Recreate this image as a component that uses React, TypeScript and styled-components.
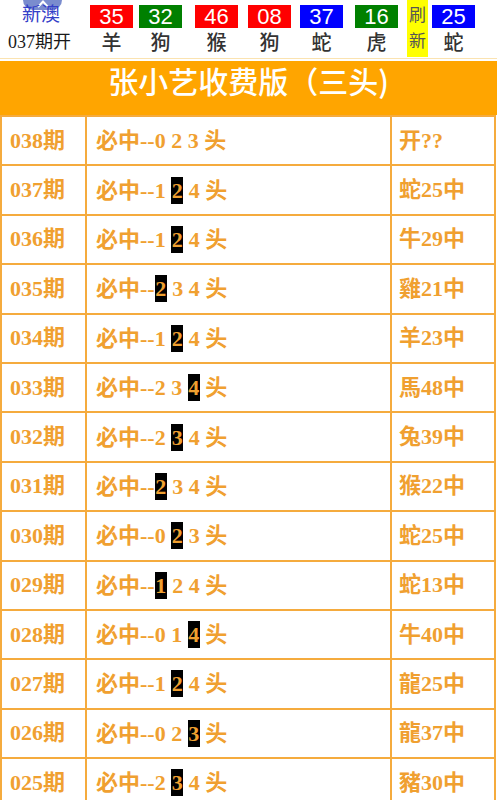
import React from "react";
import styled, { createGlobalStyle } from "styled-components";

const Global = createGlobalStyle`
  html, body { margin: 0; padding: 0; background: #fff; }
  body { width: 497px; overflow: hidden; }
`;

const Page = styled.div`
  width: 497px;
  background: #fff;
`;

const TopBar = styled.div`
  display: grid;
  grid-template-columns: 90px 49px 56px 53px 52px 55px 52px 25px 1fr;
  height: 58px;
  border-bottom: 1px solid #fbe3b0;
  font-family: "Noto Sans CJK SC", sans-serif;
`;

const IssueCell = styled.div`
  position: relative;
  display: flex;
  flex-direction: column;
  align-items: flex-start;
`;

const Tab = styled.div`
  position: absolute;
  left: 23px;
  top: 0;
  width: 39px;
  height: 10px;
  background: #7a8cce;
  border-radius: 0 0 12px 12px;
  display: flex;
  justify-content: center;
`;

const Brand = styled.div`
  position: relative;
  margin: 1px 0 0 22px;
  font-size: 19px;
  line-height: 23px;
  color: #3440c8;
`;

const OpenLabel = styled.div`
  margin: 8px 0 0 8px;
  font-family: "Liberation Serif", "Noto Sans CJK SC", serif;
  font-size: 18px;
  line-height: 20px;
  color: #1a1a1a;
`;

const BallCell = styled.div`
  display: flex;
  flex-direction: column;
  align-items: flex-start;
`;

const Ball = styled.div<{ $c: string }>`
  margin-top: 5px;
  width: 43px;
  height: 23px;
  background: ${(p) => p.$c};
  color: #fff;
  font-family: "Liberation Sans", Arial, sans-serif;
  font-size: 22px;
  line-height: 24px;
  text-align: center;
`;

const Animal = styled.div`
  width: 43px;
  margin-top: 2px;
  text-align: center;
  font-size: 20px;
  line-height: 24px;
  font-weight: 500;
  color: #333;
`;

const Refresh = styled.div`
  width: 21px;
  height: 57px;
  background: #ffff00;
  color: #555;
  font-size: 17px;
  line-height: 26px;
  display: flex;
  flex-direction: column;
  align-items: center;
  padding-top: 1px;
  box-sizing: border-box;
`;

const Banner = styled.div`
  margin-top: 2px;
  height: 54px;
  background: #ffa500;
  color: #fff;
  text-align: center;
  font-family: "Noto Sans CJK SC", sans-serif;
  font-size: 30px;
  font-weight: 500;
  line-height: 38px;
`;

const Table = styled.table`
  width: 494px;
  border-collapse: collapse;
  table-layout: fixed;
  font-family: "Liberation Serif", "Noto Sans CJK SC", serif;
  font-weight: bold;
  font-size: 22px;
  color: #f0a030;
`;

const Td = styled.td<{ $pad: number; $w: number }>`
  box-sizing: border-box;
  width: ${(p) => p.$w}px;
  height: 49.4px;
  padding: 0 0 0 ${(p) => p.$pad}px;
  border: 2px solid #f5ab3e;
  white-space: nowrap;
  vertical-align: middle;
  line-height: 26px;
`;

const Hit = styled.span`
  display: inline-block;
  background: #000;
  color: #f0a030;
  width: 12px;
  text-align: center;
  line-height: 27px;
`;

const balls = [
  { n: "35", c: "#ff0000", a: "羊" },
  { n: "32", c: "#008000", a: "狗" },
  { n: "46", c: "#ff0000", a: "猴" },
  { n: "08", c: "#ff0000", a: "狗" },
  { n: "37", c: "#0000ff", a: "蛇" },
  { n: "16", c: "#008000", a: "虎" },
];

const rows: [string, string[], number, string][] = [
  ["038", ["0", "2", "3"], -1, "开??"],
  ["037", ["1", "2", "4"], 1, "蛇25中"],
  ["036", ["1", "2", "4"], 1, "牛29中"],
  ["035", ["2", "3", "4"], 0, "雞21中"],
  ["034", ["1", "2", "4"], 1, "羊23中"],
  ["033", ["2", "3", "4"], 2, "馬48中"],
  ["032", ["2", "3", "4"], 1, "兔39中"],
  ["031", ["2", "3", "4"], 0, "猴22中"],
  ["030", ["0", "2", "3"], 1, "蛇25中"],
  ["029", ["1", "2", "4"], 0, "蛇13中"],
  ["028", ["0", "1", "4"], 2, "牛40中"],
  ["027", ["1", "2", "4"], 1, "龍25中"],
  ["026", ["0", "2", "3"], 2, "龍37中"],
  ["025", ["2", "3", "4"], 1, "豬30中"],
];

export default function App() {
  return (
    <Page>
      <Global />
      <TopBar>
        <IssueCell>
          <Tab>
            <svg width="14" height="8" viewBox="0 0 14 8">
              <path d="M2 7 L7 1.5 L12 7" stroke="#fff" strokeWidth="2" fill="none" />
            </svg>
          </Tab>
          <Brand>新澳</Brand>
          <OpenLabel>037期开</OpenLabel>
        </IssueCell>
        {balls.map((b, i) => (
          <BallCell key={i}>
            <Ball $c={b.c}>{b.n}</Ball>
            <Animal>{b.a}</Animal>
          </BallCell>
        ))}
        <BallCell>
          <Refresh>
            <span>刷</span>
            <span>新</span>
          </Refresh>
        </BallCell>
        <BallCell>
          <Ball $c="#0000ff">25</Ball>
          <Animal>蛇</Animal>
        </BallCell>
      </TopBar>
      <Banner>张小艺收费版（三头)</Banner>
      <Table>
        <tbody>
          {rows.map(([p, nums, hit, res]) => (
            <tr key={p}>
              <Td $w={85} $pad={8}>{p}期</Td>
              <Td $w={305} $pad={9}>
                必中--
                {nums.map((d, i) => (
                  <React.Fragment key={i}>
                    {i > 0 ? " " : ""}
                    {i === hit ? <Hit>{d}</Hit> : d}
                  </React.Fragment>
                ))}{" "}
                头
              </Td>
              <Td $w={104} $pad={7}>{res}</Td>
            </tr>
          ))}
        </tbody>
      </Table>
    </Page>
  );
}
